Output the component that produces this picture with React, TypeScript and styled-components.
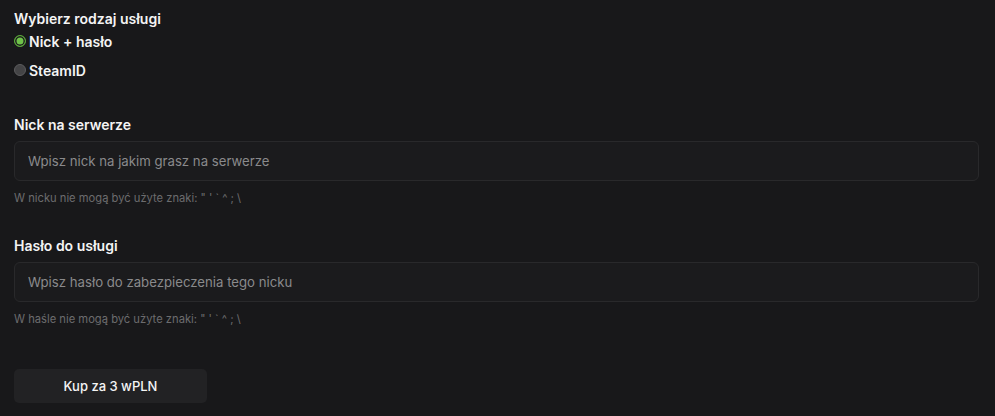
import React from "react";
import styled, { createGlobalStyle } from "styled-components";

const Global = createGlobalStyle`
  html, body { margin: 0; padding: 0; background: #18181a; }
  body { font-family: Inter, "Noto Sans", sans-serif; color: #f2f2f2; }
  * { box-sizing: border-box; }
`;

const Page = styled.div`
  padding: 10px 16px 0 14px;
  display: flex;
  flex-direction: column;
`;

const Title = styled.div`
  font-size: 14px;
  font-weight: 600;
  line-height: 18px;
  color: #f4f4f4;
`;

const RadioGroup = styled.div`
  display: flex;
  flex-direction: column;
  gap: 11px;
  margin-top: 5px;
`;

const RadioRow = styled.label`
  display: flex;
  align-items: center;
  gap: 3px;
  font-size: 14px;
  font-weight: 600;
  line-height: 18px;
  color: #f4f4f4;
`;

const RadioDot = styled.span<{ $checked?: boolean }>`
  width: 12px;
  height: 12px;
  border-radius: 50%;
  margin-top: -3px;
  background: ${(p) => (p.$checked ? "#6fc24a" : "#444446")};
  border: 1.5px solid ${(p) => (p.$checked ? "#5aa83a" : "#5c5c5e")};
  box-shadow: ${(p) => (p.$checked ? "inset 0 0 0 1.5px #1b1b1d" : "none")};
`;

const Field = styled.div<{ $top: number }>`
  display: flex;
  flex-direction: column;
  margin-top: ${(p) => p.$top}px;
`;

const Label = styled.div`
  font-size: 14px;
  font-weight: 600;
  line-height: 18px;
  color: #f4f4f4;
`;

const Input = styled.input`
  margin-top: 7px;
  height: 40px;
  width: 100%;
  background: #1b1b1d;
  border: 1px solid #29292b;
  border-radius: 6px;
  padding: 0 13px;
  font-family: Inter, "Noto Sans", sans-serif;
  font-size: 13.2px;
  color: #ddd;
  outline: none;
  &::placeholder { color: #8a8a8c; }
`;

const Hint = styled.div`
  margin-top: 10px;
  font-size: 11.2px;
  line-height: 14px;
  color: #6c6c6e;
`;

const Button = styled.button`
  margin-top: 43px;
  width: 193px;
  height: 34px;
  border: none;
  border-radius: 5px;
  background: #222224;
  color: #f4f4f4;
  font-family: Inter, "Noto Sans", sans-serif;
  font-size: 13px;
  font-weight: 500;
`;

export default function App() {
  return (
    <>
      <Global />
      <Page>
        <Title>Wybierz rodzaj usługi</Title>
        <RadioGroup>
          <RadioRow>
            <RadioDot $checked />
            Nick + hasło
          </RadioRow>
          <RadioRow>
            <RadioDot />
            SteamID
          </RadioRow>
        </RadioGroup>
        <Field $top={36}>
          <Label>Nick na serwerze</Label>
          <Input placeholder="Wpisz nick na jakim grasz na serwerze" />
          <Hint>W nicku nie mogą być użyte znaki: " ' ` ^ ; \</Hint>
        </Field>
        <Field $top={32}>
          <Label>Hasło do usługi</Label>
          <Input placeholder="Wpisz hasło do zabezpieczenia tego nicku" />
          <Hint>W haśle nie mogą być użyte znaki: " ' ` ^ ; \</Hint>
        </Field>
        <Button>Kup za 3 wPLN</Button>
      </Page>
    </>
  );
}
